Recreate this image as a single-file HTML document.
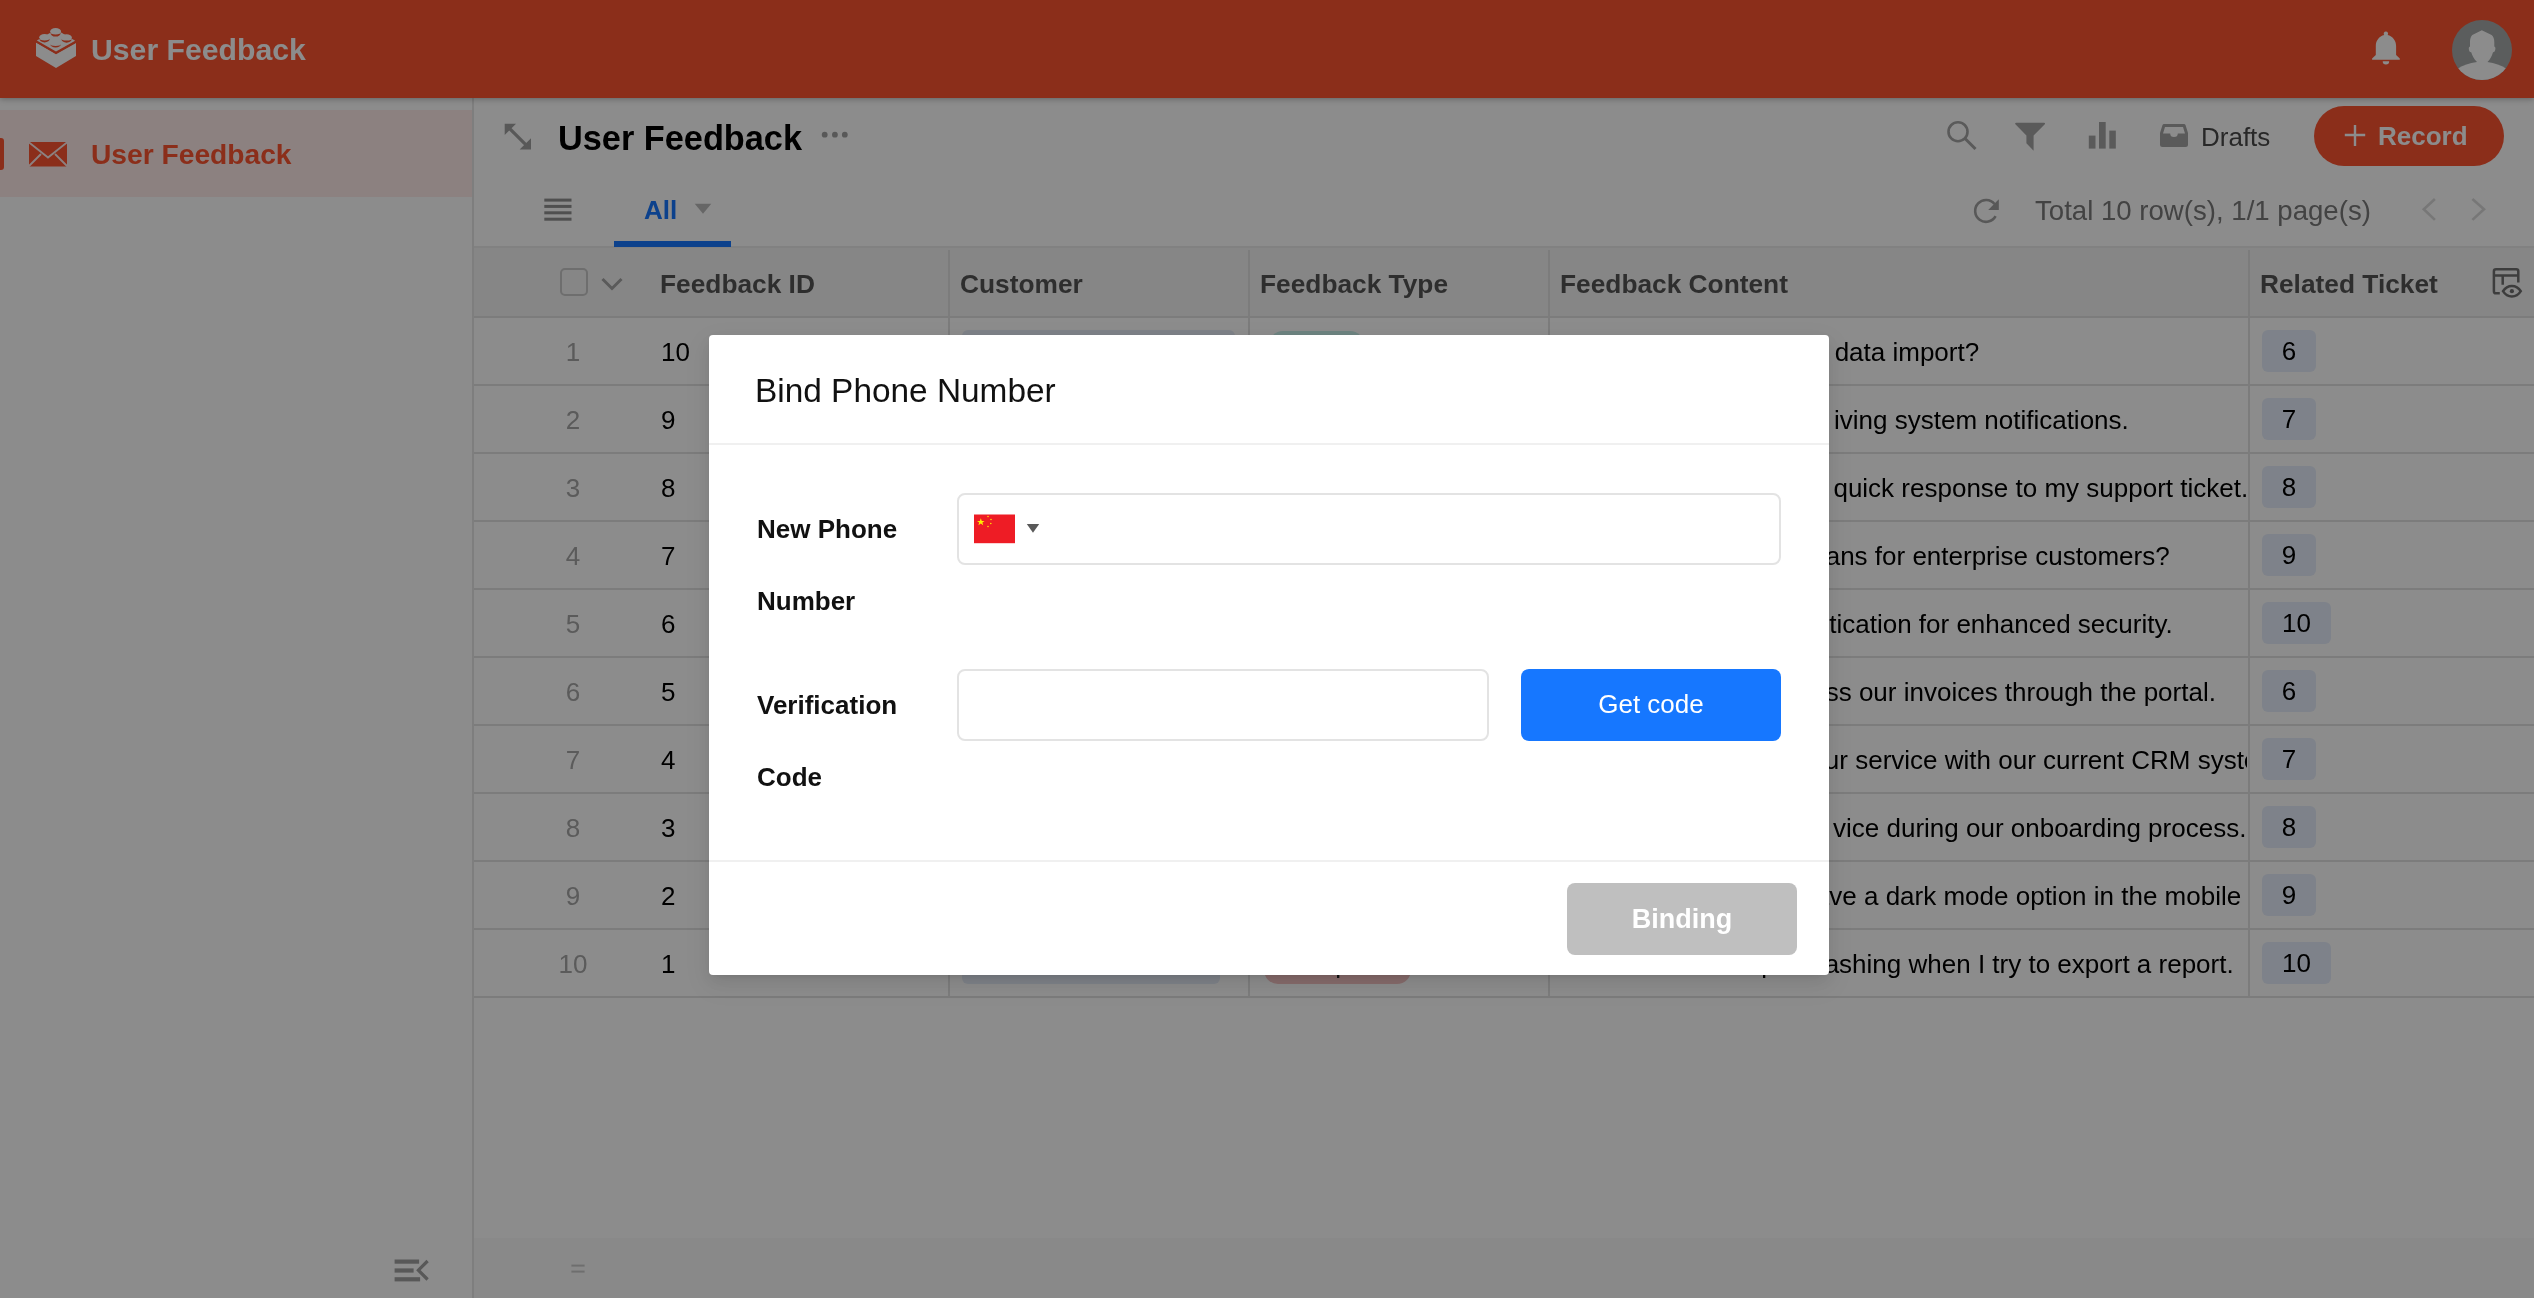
<!DOCTYPE html>
<html><head><meta charset="utf-8">
<style>
*{box-sizing:border-box;margin:0;padding:0}
html,body{width:2534px;height:1298px;overflow:hidden;background:#fff;font-family:"Liberation Sans",sans-serif;color:#000;-webkit-font-smoothing:antialiased}
.abs{position:absolute}
svg{position:absolute;overflow:visible}
.t{position:absolute;white-space:nowrap;line-height:1}
.b{font-weight:bold}
#hdr{position:absolute;left:0;top:0;width:2534px;height:98px;background:#FD5431;box-shadow:0 1px 6px rgba(0,0,0,0.3);z-index:3}
#side{position:absolute;left:0;top:98px;width:472px;height:1200px;background:#fff;z-index:1}
#sideb{position:absolute;left:472px;top:98px;width:2px;height:1200px;background:#e6e6e6;z-index:2}
#content{position:absolute;left:474px;top:98px;width:2060px;height:1200px;background:#fff}
#mask{position:absolute;left:0;top:0;width:2534px;height:1298px;background:rgba(0,0,0,0.45);z-index:10}
#dlg{position:absolute;left:709px;top:335px;width:1120px;height:640px;background:#fff;border-radius:4px;z-index:11;box-shadow:0 6px 16px rgba(0,0,0,0.08),0 3px 6px -4px rgba(0,0,0,0.12),0 9px 28px 8px rgba(0,0,0,0.05)}
.row{position:absolute;left:474px;width:2060px;height:2px;background:#E2E2E2}
.col{position:absolute;width:2px;background:#E2E2E2}
.cell{position:absolute;font-size:26px;line-height:1;white-space:nowrap;color:#000}
.rn{position:absolute;left:533px;width:80px;text-align:center;font-size:26px;line-height:1;color:#A6A6A6}
.tag{position:absolute;left:2262px;height:42px;background:#E6EDFB;border-radius:6px;font-size:26px;line-height:42px;text-align:center;color:#000}
.ct{position:absolute;font-size:26px;line-height:1;white-space:nowrap;color:#000;text-align:right}
.t,.cell,.rn,.tag,.ct{will-change:transform}
</style></head>
<body>
<!-- HEADER -->
<div id="hdr">
  <svg style="left:36px;top:28px" width="40" height="40" viewBox="0 0 40 40">
    <path fill="#fff" d="M0,14.6 L20,26.2 L40,15 V28 L20,40 L0,28 Z"/>
    <path fill="#fff" d="M0.8,12.6 L20,1.5 L39.2,12.8 L20,23.6 Z"/>
    <ellipse fill="#fff" cx="19.6" cy="3.2" rx="5.4" ry="3.2"/>
    <path fill="#FD5431" d="M14.3,4.6 A5.3,1.8 0 0 0 24.9,4.6 A5.3,4 0 0 1 14.3,4.6 Z"/>
    <ellipse fill="#fff" cx="8.55" cy="9.2" rx="5.3" ry="3.2"/>
    <path fill="#FD5431" d="M3.3,10.6 A5.3,1.8 0 0 0 13.9,10.6 A5.3,3.9 0 0 1 3.3,10.6 Z"/>
    <ellipse fill="#fff" cx="30.55" cy="9.4" rx="5.3" ry="3.2"/>
    <path fill="#FD5431" d="M25.3,10.8 A5.3,1.8 0 0 0 35.9,10.8 A5.3,3.9 0 0 1 25.3,10.8 Z"/>
    <path fill="#FD5431" d="M14.3,16 A5.3,1.9 0 0 0 24.9,16 A5.3,3.6 0 0 1 14.3,16 Z"/>
    <path fill="none" stroke="#FD5431" stroke-width="1.4" d="M0,13.6 L20,25 L40,13.9"/>
  </svg>
  <div class="t b" style="left:90.5px;top:34.5px;font-size:30.2px;color:#fff">User Feedback</div>
  <!-- bell -->
  <svg style="left:2372px;top:31px" width="28" height="34" viewBox="0 0 28 34">
    <path fill="#fff" d="M13.9,0.4 A2.2,2.2 0 0 1 15.6,4.0 C20.6,5.3 24.1,9.4 24.1,15 V24 L27.8,27.6 V28.8 H0.1 V27.6 L3.8,24 V15 C3.8,9.4 7.2,5.3 12.2,4.0 A2.2,2.2 0 0 1 13.9,0.4 Z"/>
    <path fill="#fff" d="M10.7,30.3 H17.2 A3.25,3.25 0 0 1 10.7,30.3 Z"/>
  </svg>
  <!-- avatar -->
  <svg style="left:2452px;top:20px" width="60" height="60" viewBox="0 0 60 60">
    <defs><clipPath id="avc"><circle cx="30" cy="30" r="30"/></clipPath></defs>
    <circle cx="30" cy="30" r="30" fill="#A6AAAA"/>
    <g clip-path="url(#avc)" fill="#fff">
      <path d="M29.8,10.2 L39.6,15 C41.5,16.5 42.3,19 42.3,22 V26.5 C43.5,26.8 43.6,28.5 43.2,30 C42.8,31.6 42,32.3 41,32.2 C40,35.5 38.5,39 35.5,42 H25 C22,39 20.2,35.5 19.2,32.2 C18.2,32.3 17.3,31.6 17,30 C16.6,28.5 16.8,26.8 18,26.5 V22 C18,19 18.8,16.5 20.3,15 Z"/>
      <path d="M6,48.5 C11,45.5 17,43 25,42 H35.3 C43,43 49,45.5 54,48.5 L60,60 H0 Z"/>
    </g>
  </svg>
</div>

<!-- SIDEBAR -->
<div id="side">
  <div class="abs" style="left:0;top:12px;width:472px;height:87px;background:#FFECE9"></div>
  <div class="abs" style="left:0;top:40px;width:4px;height:32px;background:#FD5431;border-radius:0 3px 3px 0"></div>
  <svg style="left:29px;top:44px" width="38" height="24" viewBox="0 0 38 24">
    <rect x="0" y="0" width="38" height="24.5" fill="#FD5431"/>
    <path fill="none" stroke="#FFECE9" stroke-width="1.8" d="M-0.5,0 L19,15.5 L38.5,0 M-0.5,24.5 L12,12 M38.5,24.5 L26,12"/>
  </svg>
  <div class="t b" style="left:90.5px;top:41.8px;font-size:28.2px;color:#FD5431">User Feedback</div>
  <!-- collapse icon -->
  <svg style="left:394px;top:1161px" width="36" height="26" viewBox="0 0 36 26">
    <rect x="0.6" y="0.5" width="24.5" height="4.2" fill="#A0A0A0"/>
    <rect x="0.6" y="9.4" width="19" height="4.2" fill="#A0A0A0"/>
    <rect x="0.6" y="18.2" width="25.5" height="4.2" fill="#A0A0A0"/>
    <path fill="none" stroke="#A0A0A0" stroke-width="3.2" d="M33.6,2 L24.4,11.2 L33.6,20.5"/>
  </svg>
</div>
<div id="sideb"></div>

<!-- CONTENT -->
<div id="content">
  <!-- expand icon -->
  <svg style="left:30px;top:25px" width="28" height="28" viewBox="0 0 28 28">
    <path fill="#A0A0A0" d="M0.7,0.8 H12 L0.7,12 Z M27,26.5 H15.6 L27,15.2 Z"/>
    <path stroke="#A0A0A0" stroke-width="3.2" d="M4,4 L23.5,23.3"/>
  </svg>
  <div class="t b" style="left:84px;top:23px;font-size:34.3px;color:#000">User Feedback</div>
  <svg style="left:347px;top:33px" width="30" height="8" viewBox="0 0 30 8">
    <circle cx="3.7" cy="3.7" r="2.9" fill="#A0A0A0"/><circle cx="13.9" cy="3.7" r="2.9" fill="#A0A0A0"/><circle cx="23.8" cy="3.7" r="2.9" fill="#A0A0A0"/>
  </svg>
</div>

<!-- toolbar right (absolute page coords) -->
<svg style="left:1940px;top:115px;z-index:4" width="40" height="40" viewBox="0 0 40 40">
  <circle cx="18" cy="16.7" r="9.5" fill="none" stroke="#A4A4A4" stroke-width="2.6"/>
  <path stroke="#A4A4A4" stroke-width="3" d="M25,23.5 L35.5,34"/>
</svg>
<svg style="left:2015px;top:122px;z-index:4" width="31" height="30" viewBox="0 0 31 30">
  <path fill="#A4A4A4" d="M1.2,0.8 H29 Q30.6,0.8 29.8,2.2 L18.6,13.6 V28.8 L11.4,21.2 V13.6 L0.4,2.2 Q-0.4,0.8 1.2,0.8 Z"/>
</svg>
<svg style="left:2088px;top:122px;z-index:4" width="29" height="28" viewBox="0 0 29 28">
  <rect x="0.8" y="13.6" width="6.7" height="13" fill="#A4A4A4"/>
  <rect x="11" y="0" width="6.7" height="26.6" fill="#A4A4A4"/>
  <rect x="21.3" y="8.6" width="6.5" height="18" fill="#A4A4A4"/>
</svg>
<svg style="left:2160px;top:124px;z-index:4" width="28" height="24" viewBox="0 0 28 24">
  <path fill="#A4A4A4" fill-rule="evenodd" d="M4,0 H24 Q25,0 25.5,1 L28,9 V20.5 Q28,23 25.5,23 H2.5 Q0,23 0,20.5 V9 L2.5,1 Q3,0 4,0 Z M5,3 L3,9.5 H10.2 A3.5,3.3 0 0 0 17.8,9.5 H25 L23,3 Z"/>
</svg>
<div class="t" style="left:2201px;top:123.8px;font-size:26px;color:#4A4A4A;z-index:4">Drafts</div>
<div class="abs" style="left:2314px;top:106px;width:190px;height:60px;border-radius:30px;background:#FD5431;z-index:4"></div>
<svg style="left:2344px;top:124px;z-index:4" width="22" height="22" viewBox="0 0 22 22">
  <path stroke="#fff" stroke-width="2.4" d="M0.8,11 H21.2 M11,1 V22"/>
</svg>
<div class="t b" style="left:2377.5px;top:123px;font-size:26px;color:#fff;z-index:4">Record</div>

<!-- tabs row -->
<svg style="left:544px;top:198px;z-index:4" width="28" height="24" viewBox="0 0 28 24">
  <rect x="0.3" y="0.6" width="27.2" height="3" fill="#909090"/>
  <rect x="0.3" y="6.9" width="27.2" height="3" fill="#909090"/>
  <rect x="0.3" y="13.3" width="27.2" height="3" fill="#909090"/>
  <rect x="0.3" y="19.7" width="27.2" height="3" fill="#909090"/>
</svg>
<div class="t b" style="left:644px;top:197px;font-size:26px;color:#1677FF;z-index:4">All</div>
<svg style="left:694px;top:203px;z-index:4" width="18" height="12" viewBox="0 0 18 12">
  <path fill="#BBBBBB" d="M0.7,0.7 H17.3 L9,10.8 Z"/>
</svg>
<div class="abs" style="left:614px;top:241px;width:117px;height:6px;background:#1677FF;z-index:5"></div>
<div class="abs" style="left:474px;top:246px;width:2060px;height:2px;background:#ececec;z-index:4"></div>

<svg style="left:1972px;top:197px;z-index:4" width="30" height="30" viewBox="0 0 30 30">
  <path fill="none" stroke="#A0A0A0" stroke-width="2.6" d="M23.6,19.2 A10.9,10.9 0 1 1 22.5,7"/>
  <path fill="#A0A0A0" d="M26.8,2.2 V12.9 H16.2 Z"/>
</svg>
<div class="t" style="left:2035px;top:196.5px;font-size:27.6px;color:#7A7A7A;z-index:4">Total 10 row(s), 1/1 page(s)</div>
<svg style="left:2420px;top:197px;z-index:4" width="70" height="26" viewBox="0 0 70 26">
  <path fill="none" stroke="#D9D9D9" stroke-width="2.6" d="M14.9,2 L3.8,12.3 L14.9,22.9 M52.4,2 L64,12.3 L52.4,22.9"/>
</svg>

<!-- TABLE -->
<div class="abs" style="left:474px;top:248px;width:2060px;height:69px;background:#F4F4F4;z-index:3"></div>
<div class="abs" style="left:474px;top:1238px;width:2060px;height:60px;background:#F9F9F9;z-index:3"></div>
<svg style="left:570px;top:1263px;z-index:4" width="16" height="12" viewBox="0 0 16 12">
  <rect x="1.4" y="1.6" width="13.2" height="2" fill="#C8C8C8"/><rect x="1.4" y="7.6" width="13.2" height="2" fill="#C8C8C8"/>
</svg>
<div style="position:absolute;left:0;top:0;width:2534px;height:1298px;z-index:4">
  <div class="row" style="top:316px"></div>
  <div class="row" style="top:384px"></div>
  <div class="row" style="top:452px"></div>
  <div class="row" style="top:520px"></div>
  <div class="row" style="top:588px"></div>
  <div class="row" style="top:656px"></div>
  <div class="row" style="top:724px"></div>
  <div class="row" style="top:792px"></div>
  <div class="row" style="top:860px"></div>
  <div class="row" style="top:928px"></div>
  <div class="row" style="top:996px"></div>
  <div class="col" style="left:948px;top:250px;height:748px"></div>
  <div class="col" style="left:1248px;top:250px;height:748px"></div>
  <div class="col" style="left:1548px;top:250px;height:748px"></div>
  <div class="col" style="left:2248px;top:250px;height:748px"></div>

  <div class="abs" style="left:560px;top:268px;width:28px;height:28px;border:2px solid #C8C8C8;border-radius:5px"></div>
  <svg style="left:600px;top:276px" width="24" height="16" viewBox="0 0 24 16">
    <path fill="none" stroke="#A4A4A4" stroke-width="3" d="M2.5,3 L12,12.5 L21.5,3"/>
  </svg>
  <div class="cell b" style="left:660px;top:271px;font-size:26.3px;color:#555">Feedback ID</div>
  <div class="cell b" style="left:960px;top:271px;font-size:26.3px;color:#555">Customer</div>
  <div class="cell b" style="left:1260px;top:271px;font-size:26.3px;color:#555">Feedback Type</div>
  <div class="cell b" style="left:1560px;top:271px;font-size:26.3px;color:#555">Feedback Content</div>
  <div class="cell b" style="left:2260px;top:271px;font-size:26.3px;color:#555">Related Ticket</div>
  <svg style="left:2480px;top:260px" width="54" height="45" viewBox="0 0 54 45">
    <g fill="none" stroke="#707070" stroke-width="2.5">
      <path d="M19.8,33.3 H16 Q13.9,33.3 13.9,31.2 V11.3 Q13.9,9.3 16,9.3 H36.3 Q38.3,9.3 38.3,11.3 V22.5"/>
      <path d="M13.9,15.5 H38.3 M22.7,15.5 V24.8"/>
      <path d="M23,31.2 C25.5,27.2 28.6,25.9 31.9,25.9 C35.2,25.9 38.3,27.2 40.8,31.2 C38.3,35.2 35.2,36.5 31.9,36.5 C28.6,36.5 25.5,35.2 23,31.2 Z"/>
    </g>
    <circle cx="31.9" cy="31.2" r="2.1" fill="#707070"/>
  </svg>

  <!-- row numbers -->
  <div class="rn" style="top:339px">1</div>
  <div class="rn" style="top:407px">2</div>
  <div class="rn" style="top:475px">3</div>
  <div class="rn" style="top:543px">4</div>
  <div class="rn" style="top:611px">5</div>
  <div class="rn" style="top:679px">6</div>
  <div class="rn" style="top:747px">7</div>
  <div class="rn" style="top:815px">8</div>
  <div class="rn" style="top:883px">9</div>
  <div class="rn" style="top:951px">10</div>
  <!-- ids -->
  <div class="cell" style="left:661px;top:339px">10</div>
  <div class="cell" style="left:661px;top:407px">9</div>
  <div class="cell" style="left:661px;top:475px">8</div>
  <div class="cell" style="left:661px;top:543px">7</div>
  <div class="cell" style="left:661px;top:611px">6</div>
  <div class="cell" style="left:661px;top:679px">5</div>
  <div class="cell" style="left:661px;top:747px">4</div>
  <div class="cell" style="left:661px;top:815px">3</div>
  <div class="cell" style="left:661px;top:883px">2</div>
  <div class="cell" style="left:661px;top:951px">1</div>
  <!-- hidden tags peeking -->
  <div class="abs" style="left:962px;top:330px;width:273px;height:42px;border-radius:6px;background:#E5ECF8"></div>
  <div class="abs" style="left:1269px;top:331px;width:95px;height:42px;border-radius:14px;background:#C8F0EA"></div>
  <div class="abs" style="left:962px;top:942px;width:258px;height:42px;border-radius:6px;background:#E5ECF8"></div>
  <div class="abs" style="left:1264px;top:942px;width:147px;height:42px;border-radius:14px;background:#F4C2C2"></div>
  <div class="cell" style="left:1276px;top:951px;width:126px;text-align:center;color:#222">Complaint</div>

  <!-- content (right anchored) -->
  <div class="ct" style="right:555px;top:339px">Is there any way to get help with data import?</div>
  <div class="ct" style="right:405px;top:407px">iving system notifications.</div>
  <div class="ct" style="right:286px;top:475px">Thanks for the quick response to my support ticket.</div>
  <div class="ct" style="right:364px;top:543px">Do you offer discount plans for enterprise customers?</div>
  <div class="ct" style="right:361.5px;top:611px">Please add two-factor authentication for enhanced security.</div>
  <div class="ct" style="right:318px;top:679px">We are unable to access our invoices through the portal.</div>
  <div class="abs" style="left:1560px;top:740px;width:686.5px;height:40px;overflow:hidden">
    <div class="ct" style="right:-41px;top:7px">integrate your service with our current CRM system.</div>
  </div>
  <div class="ct" style="right:288px;top:815px">vice during our onboarding process.</div>
  <div class="ct" style="right:293px;top:883px">It would be great to have a dark mode option in the mobile</div>
  <div class="ct" style="right:300px;top:951px">crashing when I try to export a report.</div>
  <div class="ct" style="right:737.5px;top:951px">The website keeps&nbsp;</div>

  <!-- tickets -->
  <div class="tag" style="top:330px;width:54px">6</div>
  <div class="tag" style="top:398px;width:54px">7</div>
  <div class="tag" style="top:466px;width:54px">8</div>
  <div class="tag" style="top:534px;width:54px">9</div>
  <div class="tag" style="top:602px;width:69px">10</div>
  <div class="tag" style="top:670px;width:54px">6</div>
  <div class="tag" style="top:738px;width:54px">7</div>
  <div class="tag" style="top:806px;width:54px">8</div>
  <div class="tag" style="top:874px;width:54px">9</div>
  <div class="tag" style="top:942px;width:69px">10</div>
</div>

<div id="mask"></div>

<!-- DIALOG -->
<div id="dlg">
  <div class="t" style="left:46px;top:38.5px;font-size:33.4px;color:#111">Bind Phone Number</div>
  <div class="abs" style="left:0;top:108px;width:1120px;height:2px;background:#f0f0f0"></div>
  <div class="t b" style="left:48px;top:181.3px;font-size:26px;color:#111">New Phone</div>
  <div class="t b" style="left:48px;top:253px;font-size:26px;color:#111">Number</div>
  <div class="abs" style="left:248px;top:158px;width:824px;height:72px;border:2px solid #E3E3E3;border-radius:8px"></div>
  <svg style="left:265px;top:179px" width="42" height="30" viewBox="0 0 42 30">
    <rect x="0" y="0.5" width="41" height="28.7" fill="#EE1C25"/>
    <path fill="#FFEE00" d="M6.8,4.2 L7.8,6.9 L10.6,6.9 L8.4,8.6 L9.2,11.3 L6.8,9.6 L4.4,11.3 L5.2,8.6 L3,6.9 L5.8,6.9 Z"/>
    <circle cx="14" cy="2.6" r="0.75" fill="#FFEE00"/><circle cx="17" cy="5.6" r="0.75" fill="#FFEE00"/>
    <circle cx="16.8" cy="9.4" r="0.75" fill="#FFEE00"/><circle cx="14" cy="12.4" r="0.75" fill="#FFEE00"/>
  </svg>
  <svg style="left:317px;top:188px" width="14" height="12" viewBox="0 0 14 12">
    <path fill="#595959" d="M0.8,1 H13.2 L7,9.8 Z"/>
  </svg>
  <div class="t b" style="left:48px;top:357.2px;font-size:26px;color:#111">Verification</div>
  <div class="t b" style="left:48px;top:429.4px;font-size:26px;color:#111">Code</div>
  <div class="abs" style="left:248px;top:334px;width:532px;height:72px;border:2px solid #E3E3E3;border-radius:8px"></div>
  <div class="abs" style="left:812px;top:334px;width:260px;height:72px;border-radius:8px;background:#1677FF"></div>
  <div class="t" style="left:812px;width:260px;text-align:center;top:356.4px;font-size:26px;color:#fff">Get code</div>
  <div class="abs" style="left:0;top:525px;width:1120px;height:2px;background:#f0f0f0"></div>
  <div class="abs" style="left:858px;top:548px;width:230px;height:72px;border-radius:8px;background:#BFBFBF"></div>
  <div class="t b" style="left:858px;width:230px;text-align:center;top:571px;font-size:27px;color:#fff">Binding</div>
</div>
</body></html>
